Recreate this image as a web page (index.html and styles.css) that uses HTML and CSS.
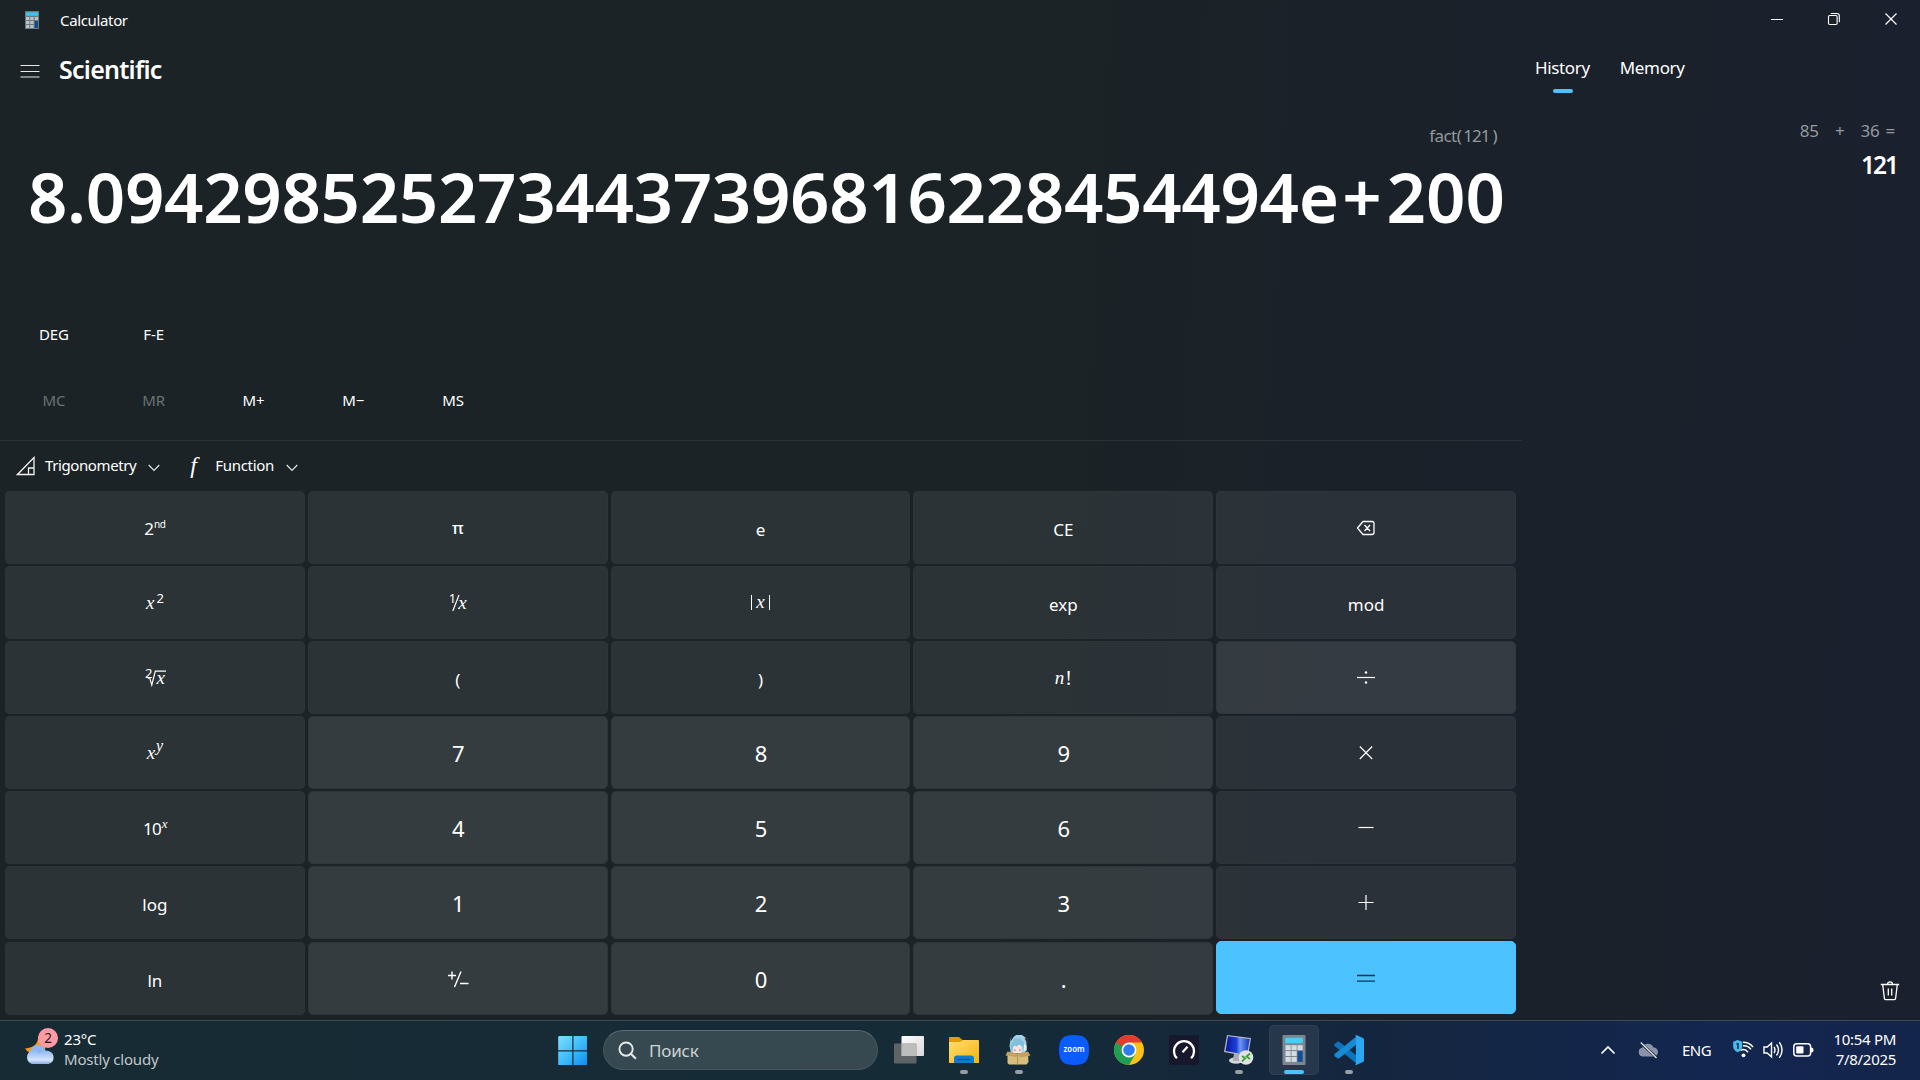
FILE: index.html
```html
<!DOCTYPE html>
<html lang="en">
<head>
<meta charset="utf-8">
<title>Calculator</title>
<link rel="stylesheet" href="styles.css">
</head>
<body>
<div class="desktop">
  <div class="window">
    <header class="titlebar">
      <svg class="app-icon" viewBox="0 0 14 18"><rect width="14" height="18" rx=".6" fill="#6d7a82"/><rect x="1" y="1.4" width="12" height="3.4" fill="#35c8f3"/><g fill="#b9c3c9"><rect x="1" y="6" width="3.3" height="3"/><rect x="5.3" y="6" width="3.3" height="3"/><rect x="9.7" y="6" width="3.3" height="3"/><rect x="1" y="10" width="3.3" height="3"/><rect x="5.3" y="10" width="3.3" height="3"/><rect x="1" y="14" width="3.3" height="3"/><rect x="5.3" y="14" width="3.3" height="3"/></g><rect x="9.7" y="10" width="3.3" height="7" fill="#134b8a"/></svg>
      <span class="app-name">Calculator</span>
      <div class="caption-buttons">
        <svg viewBox="0 0 57 40"><path d="M22 19.5h12" stroke="#fff" fill="none"/></svg>
        <svg viewBox="0 0 57 40"><g fill="none" stroke="#fff" stroke-width="1.1"><rect x="22.5" y="15.5" width="8.6" height="9" rx="1.2"/><path d="M24.800 13.500h6.200a2.300 2.300 0 0 1 2.300 2.300v6.400"/></g></svg>
        <svg viewBox="0 0 57 40"><path d="M22.500 13.500l11 11M33.500 13.500l-11 11" stroke="#fff" stroke-width="1.200" fill="none"/></svg>
      </div>
    </header>
    <div class="content">
      <main class="calc">
        <div class="mode">
          <svg class="burger" viewBox="0 0 20 16"><path d="M.5 2.500h19M.5 8.500h19M.5 14h19" stroke="#e8eaea" stroke-width="1.100"/></svg>
          <h1>Scientific</h1>
        </div>
        <div class="expression"><span>fact(</span><span class="arg">121</span><span>)</span></div>
        <div class="result"><span class="mantissa">8.0942985252734437396816228454494</span>e<span class="exp-sign">+</span>200</div>
        <div class="flat-row deg"><span>DEG</span><span>F-E</span></div>
        <div class="flat-row mem"><span class="off">MC</span><span class="off">MR</span><span>M+</span><span>M−</span><span>MS</span></div>
        <div class="menus">
          <svg class="tri" viewBox="0 0 20 20"><path d="M1.500 18.500h16.500V1.500zM12.500 18v-6H18" fill="none" stroke="#f1f3f3" stroke-width="1.300"/></svg>
          <span class="trig">Trigonometry</span>
          <svg class="chev" viewBox="0 0 12 8"><path d="M.7 1l5.300 5.500L11.300 1" fill="none" stroke="#e4e6e6" stroke-width="1.200"/></svg>
          <span class="f">f</span>
          <span class="func">Function</span>
          <svg class="chev" viewBox="0 0 12 8"><path d="M.7 1l5.300 5.500L11.300 1" fill="none" stroke="#e4e6e6" stroke-width="1.200"/></svg>
        </div>
        <div class="keys">
          <div class="key"><span class="sym second">2<sup class="nd">nd</sup></span></div>
          <div class="key"><span class="sym pi">π</span></div>
          <div class="key"><span>e</span></div>
          <div class="key"><span>CE</span></div>
          <div class="key"><svg class="ic" viewBox="0 0 20 20"><path d="M7 3.500h9a2 2 0 0 1 2 2v9a2 2 0 0 1-2 2H7L1.500 10zM8.500 7l5.500 6M14 7l-5.500 6" fill="none" stroke="#fff" stroke-width="1.300" stroke-linejoin="round"/></svg></div>

          <div class="key"><span class="sym"><i>x</i><sup class="two">2</sup></span></div>
          <div class="key"><span class="sym frac"><sup class="one">1</sup><svg viewBox="0 0 8 18"><path d="M.8 17L7 1" stroke="#fff" stroke-width="1.200"/></svg><i>x</i></span></div>
          <div class="key"><span class="sym abs"><b></b><i>x</i><b></b></span></div>
          <div class="key"><span>exp</span></div>
          <div class="key"><span>mod</span></div>

          <div class="key"><span class="sym root"><sup class="deg2">2</sup><svg viewBox="0 0 20 20"><path d="M.8 10.500l1.800-.8L4.800 17 8.300 3.200H19" fill="none" stroke="#fff" stroke-width="1.200"/></svg><i>x</i></span></div>
          <div class="key"><span>(</span></div>
          <div class="key"><span>)</span></div>
          <div class="key"><span class="sym"><i>n</i><b class="bang">!</b></span></div>
          <div class="key hover"><svg class="ic" viewBox="0 0 20 20"><path d="M1 9.500h18" stroke="#fff" stroke-width="1.200"/><circle cx="10" cy="4.500" r="1.200" fill="#fff"/><circle cx="10" cy="14.500" r="1.200" fill="#fff"/></svg></div>

          <div class="key"><span class="sym"><i>x</i><sup class="pow"><i>y</i></sup></span></div>
          <div class="key num"><span>7</span></div>
          <div class="key num"><span>8</span></div>
          <div class="key num"><span>9</span></div>
          <div class="key"><svg class="ic" viewBox="0 0 20 20"><path d="M3.800 3.500l12.400 12.500M16.200 3.500L3.800 16" stroke="#fff" stroke-width="1.200"/></svg></div>

          <div class="key"><span class="sym ten-key">10<sup class="ten"><i>x</i></sup></span></div>
          <div class="key num"><span>4</span></div>
          <div class="key num"><span>5</span></div>
          <div class="key num"><span>6</span></div>
          <div class="key"><svg class="ic" viewBox="0 0 20 20"><path d="M2.500 9.500h15" stroke="#fff" stroke-width="1.200"/></svg></div>

          <div class="key"><span>log</span></div>
          <div class="key num"><span>1</span></div>
          <div class="key num"><span>2</span></div>
          <div class="key num"><span>3</span></div>
          <div class="key"><svg class="ic" viewBox="0 0 20 20"><path d="M2.500 9.500h15M10 2v15" stroke="#fff" stroke-width="1.200"/></svg></div>

          <div class="key last"><span>ln</span></div>
          <div class="key num last"><svg class="sign" viewBox="0 0 24 20"><path d="M2 6.500h8M6 2.500v8M8.500 18L15 2.500M14 14.500h8.500" stroke="#fff" stroke-width="1.400" fill="none"/></svg></div>
          <div class="key num last"><span>0</span></div>
          <div class="key num last"><span>.</span></div>
          <div class="key equals"><svg class="ic" viewBox="0 0 20 20"><path d="M1 7.500h18M1 13.200h18" stroke="#173549" stroke-width="1.300"/></svg></div>
        </div>
      </main>
      <aside class="history">
        <nav class="tabs"><span class="tab active">History</span><span class="tab">Memory</span></nav>
        <div class="entry">
          <div class="entry-exp"><span>85</span><span class="plus">+</span><span>36</span><span class="eq">=</span></div>
          <div class="entry-res">121</div>
        </div>
        <svg class="trash" viewBox="0 0 20 22"><g fill="none" stroke="#fff" stroke-width="1.300"><path d="M.8 4.500h18.400M7.500 4.300a2.500 2.500 0 0 1 5 0M2.700 4.500l1.700 13.800a1.500 1.500 0 0 0 1.500 1.300h8.200a1.500 1.500 0 0 0 1.500-1.300L17.300 4.500M8.300 8.500v7M11.700 8.500v7"/></g></svg>
      </aside>
    </div>
  </div>

  <footer class="taskbar">
    <div class="weather">
      <div class="weather-icon">
        <svg viewBox="0 0 32 32"><defs><linearGradient id="cl" x1="0" y1="0" x2="0" y2="1"><stop offset="0" stop-color="#8fb9f2"/><stop offset=".7" stop-color="#d5e4fb"/><stop offset="1" stop-color="#8ba8e6"/></linearGradient></defs><path d="M14 1c.8 7-4 12-13 12.500C4 18 9 20 14 19c5-1 8-5 8-9S18 3 14 1z" fill="#f29a1f"/><circle cx="14" cy="18" r="8" fill="#8fb6f0"/><path d="M8 29a7 7 0 0 1-1-13c4-1 7 .5 8.500 3 2-3 6-4 9-3a6.700 6.700 0 0 1 0 13z" fill="url(#cl)"/></svg>
        <span class="badge">2</span>
      </div>
      <div class="weather-text"><span>23°C</span><span class="sub">Mostly cloudy</span></div>
    </div>
    <div class="dock">
      <div class="app start"><svg viewBox="0 0 30 30"><defs><linearGradient id="wn" x1="0" y1="0" x2="1" y2="1"><stop offset="0" stop-color="#7fdfff"/><stop offset=".5" stop-color="#41bdfb"/><stop offset="1" stop-color="#0e8df0"/></linearGradient></defs><path d="M1 1h13.300v14.300H.2V2zM15.500 1H29v14.300H15.500zM.2 16.400h14.100V30H.2zM15.500 16.400H29V30H15.500z" fill="url(#wn)"/></svg></div>
      <div class="search"><svg viewBox="0 0 20 20"><circle cx="8.500" cy="8.500" r="7" fill="none" stroke="#e6e9ea" stroke-width="2"/><path d="M13.800 13.800l5 5" stroke="#e6e9ea" stroke-width="2.200"/></svg><span>Поиск</span></div>
      <div class="app"><svg viewBox="0 0 30 30"><defs><linearGradient id="tv" x1="0" y1="0" x2="1" y2="1"><stop offset="0" stop-color="#fff"/><stop offset="1" stop-color="#d8d8d8"/></linearGradient></defs><rect x="7.500" y="1" width="22.500" height="20" rx="1" fill="url(#tv)"/><rect x="0" y="8.500" width="22.500" height="20" rx="1" fill="#777" opacity=".75"/><rect x="7.500" y="8.500" width="15" height="12.500" fill="#bdbdbd"/></svg></div>
      <div class="app run"><svg viewBox="0 0 30 30"><defs><linearGradient id="fo" x1="0" y1="0" x2="1" y2="1"><stop offset="0" stop-color="#ffdd72"/><stop offset="1" stop-color="#f7b50c"/></linearGradient></defs><path d="M0 3a1 1 0 0 1 1-1h9l4 3.500H16V12H0z" fill="#e09b05"/><path d="M0 7h11.500L14 5h15a1 1 0 0 1 1 1v22H0z" fill="url(#fo)"/><path d="M5 28v-4.500A3 3 0 0 1 8 20.500h14a3 3 0 0 1 3 3V28z" fill="#0e7ad0"/><path d="M8.500 24.500h13" stroke="#0a4f94" stroke-width="1.200"/></svg></div>
      <div class="app run"><svg viewBox="0 0 30 30"><path d="M7 2l2 .5L12 0h6l4 3 1 12-3 3H7L5.500 11z" fill="#a3d3e6"/><path d="M6.500 1l3 1.500L7 6zM24.500 3l-4 .5 3.500 6z" fill="#2e3140"/><path d="M9 10h9l-.5 8H9z" fill="#f7e3df"/><path d="M6.500 10l4-6.500h6l3.500 4v8l-2-4-2.500-2-3 2-2.500-1-2 5-1.500 1z" fill="#7fc0dc"/><path d="M10 14.500h1.500v1.300H10zM15 14.500h1.500v1.300H15z" fill="#b8707a"/><path d="M20 9l2.500 2-1 4-2 2z" fill="#e9f1f5"/><path d="M3.500 17l9.500 1.500L24 17l.5 10-2 2.500H5L3.500 28z" fill="#d9bd7d"/><path d="M3.500 16.500L1.500 20.500l11 1.500 1-3.500zM24 16.500l2.500 4-10.500 2-2.500-4z" fill="#c2a163"/><path d="M13.500 19v10.500" stroke="#b08d50"/></svg></div>
      <div class="app"><svg viewBox="0 0 30 30"><path d="M15 0C26 0 30 4 30 15s-4 15-15 15S0 26 0 15 4 0 15 0z" fill="#0b5cff"/><text x="4.500" y="17" textLength="21" lengthAdjust="spacingAndGlyphs" class="zoom-word">zoom</text></svg></div>
      <div class="app"><svg viewBox="0 0 30 30"><circle cx="15" cy="15" r="15" fill="#fbc116"/><path d="M2 7.500A15 15 0 0 0 15 30l6.500-11.200L8.500 18.800z" fill="#1f9d50"/><path d="M15 7.500h13A15 15 0 0 0 2 7.500L8.500 18l6.500-6z" fill="#e33b2e"/><path d="M2 7.500l6.500 11.300 3-3L8.700 11z" fill="#1f9d50"/><circle cx="15" cy="15" r="7.400" fill="#fff"/><circle cx="15" cy="15" r="5.800" fill="#2d7bee"/></svg></div>
      <div class="app"><svg viewBox="0 0 30 30"><rect width="30" height="30" rx="1" fill="#18182c"/><path d="M8 23.300a10 10 0 1 1 14 0" fill="none" stroke="#fff" stroke-width="2.200"/><path d="M13.500 17.200l5-5.500" stroke="#fff" stroke-width="2.200"/></svg></div>
      <div class="app run"><svg viewBox="0 0 30 30"><defs><linearGradient id="mo" x1="0" y1="0" x2="1" y2="0"><stop offset="0" stop-color="#0a14a0"/><stop offset=".45" stop-color="#1c3fd8"/><stop offset=".6" stop-color="#6f97f4"/><stop offset="1" stop-color="#1433c0"/></linearGradient></defs><ellipse cx="12" cy="25.500" rx="7" ry="3.200" fill="#d4d7da"/><path d="M10 18l6 2-1 6h-6z" fill="#a8adb3"/><path d="M3 0l24 3-3 18.500L0 17z" fill="#b4bac4"/><path d="M4 1.300L25.700 4 23 20 1.500 16z" fill="url(#mo)"/><circle cx="22" cy="22.500" r="7.300" fill="#e0e3e1"/><path d="M18 21l3.200 2.300-3.200 3M26 18.500L22.500 21.500l3.500 2.500" fill="none" stroke="#37a02f" stroke-width="1.700"/></svg></div>
      <div class="app current"><svg viewBox="0 0 30 30"><rect x="3.500" width="23" height="30" rx="1" fill="#7b868f"/><rect x="6.200" y="2.800" width="17.600" height="5.400" rx=".6" fill="#41d1f7"/><g fill="#d3dbe3"><rect x="6.500" y="10.200" width="5.200" height="4.900"/><rect x="12.500" y="10.200" width="5.200" height="4.900"/><rect x="18.500" y="10.200" width="5.200" height="4.900"/><rect x="6.500" y="16.100" width="5.200" height="4.900"/><rect x="12.500" y="16.100" width="5.200" height="4.900"/><rect x="6.500" y="22" width="5.200" height="4.900"/><rect x="12.500" y="22" width="5.200" height="4.900"/></g><rect x="18.500" y="16.100" width="5.200" height="10.800" fill="#124f97"/></svg></div>
      <div class="app run"><svg viewBox="0 0 30 30"><path d="M.8 8.800L3.500 6.700q1-.6 2 .2L23 21v8L.9 11.300q-1.200-1.200-.1-2.500z" fill="#0c74bd"/><path d="M.8 21.200l2.700 2.100q1 .6 2-.2L23 9V1L.9 18.700q-1.200 1.200-.1 2.500z" fill="#168bd3"/><path d="M22.300 0L29 3q1 .5 1 1.500v21q0 1-1 1.500l-6.700 3q-1 0-1.300-.5.900.2.900-1V1.500q0-1.200-.9-1 .3-.5 1.300-.5z" fill="#2aa6f3"/></svg></div>
    </div>
    <div class="tray">
      <svg class="t-chev" viewBox="0 0 16 10"><path d="M1.500 8.500L8 2l6.500 6.500" fill="none" stroke="#fff" stroke-width="1.700"/></svg>
      <svg class="t-cloud" viewBox="0 0 20 17"><path d="M5 14.500a4.400 4.400 0 0 1-.8-8.700A6 6 0 0 1 15.500 5.500 4.500 4.500 0 0 1 15.500 14.500z" fill="#8b94a6"/><path d="M1.800.2L19 16" stroke="#15263f" stroke-width="2.600"/><path d="M2.800.5L18.500 16" stroke="#e5e8ee" stroke-width="1.300"/></svg>
      <span class="lang">ENG</span>
      <svg class="t-wifi" viewBox="0 0 21 18"><g fill="none" stroke="#fff" stroke-width="1.500"><path d="M10 2.300a13.500 13.500 0 0 1 10 4.600M10 5.800a9 9 0 0 1 8 3.600M7.500 10.400a6 6 0 0 1 7.500 1.800"/></g><circle cx="10.500" cy="15.300" r="1.900" fill="#fff"/><path d="M4.700 0l4.500 1.700v4.500q0 4-4.500 6Q.2 10.200.2 6.200V1.700z" fill="#4cb9ec"/><path d="M4.900 3v6M3.400 3.800h1.500" stroke="#10304f" stroke-width="1.600"/></svg>
      <svg class="t-vol" viewBox="0 0 20 18"><g fill="none" stroke="#fff" stroke-width="1.400"><path d="M1 6h3.200L8.500 2v14L4.200 12H1zM11 6q2 3 0 6M13.500 3.500q4 5.500 0 11M16.300 1.200q5.500 7.800 0 15.600"/></g></svg>
      <svg class="t-bat" viewBox="0 0 21 14"><rect x=".8" y=".8" width="16.800" height="12.200" rx="3" fill="none" stroke="#fff" stroke-width="1.500"/><rect x="3.200" y="3.200" width="7.300" height="7.400" rx="1" fill="#fff"/><path d="M18 4.500q2.500 0 2.500 2.500T18 9.500z" fill="#fff"/></svg>
      <div class="clock"><span>10:54 PM</span><span>7/8/2025</span></div>
    </div>
  </footer>
</div>
</body>
</html>
```
FILE: styles.css
```css
* { box-sizing: border-box; }
body {
  margin: 0;
  background: #1c2326;
  color: #fff;
  font-family: "Noto Sans", "Open Sans", sans-serif;
}
svg { display: block; flex: none; }
.desktop { width: 1920px; height: 1080px; display: flex; flex-direction: column; overflow: hidden; }
.window {
  height: 1020px;
  display: flex;
  flex-direction: column;
  background: linear-gradient(93deg, #1b2326 0%, #1b2326 52%, #1b2129 70%, #1b212b 85%, #1a202e 100%);
}

/* Title bar */
.titlebar { height: 40px; display: flex; align-items: center; padding-left: 25px; }
.app-icon { width: 14px; height: 18px; }
.app-name { margin-left: 21px; font-size: 15px; letter-spacing: -0.350px; }
.caption-buttons { display: flex; margin-left: auto; }
.caption-buttons svg { width: 57px; height: 40px; }

/* Calculator pane */
.content { flex: 1; display: flex; min-height: 0; }
.calc { width: 1522px; display: flex; flex-direction: column; }
.mode { height: 62px; display: flex; align-items: center; padding-left: 20px; }
.burger { width: 20px; height: 16px; }
.mode h1 { margin: 0 0 5px 19px; font-size: 25px; font-weight: 600; line-height: 30px; letter-spacing: -0.750px; }
.expression {
  height: 46px; display: flex; justify-content: flex-end; align-items: flex-end;
  padding-right: 25px; font-size: 17px; line-height: 24px; color: #949a9e; letter-spacing: -0.550px;
}
.expression .arg { margin: 0 3px 0 2px; letter-spacing: -1px; }
.result {
  height: 166px; padding-right: 17px; text-align: right; white-space: nowrap;
  font-size: 69px; font-weight: 600; line-height: 97px;
}
.mantissa { letter-spacing: -0.340px; }
.exp-sign { margin: 0 5px 0 3px; }
.flat-row { display: flex; padding-left: 4px; font-size: 15px; line-height: 40px; }
.flat-row span { width: 99.800px; text-align: center; letter-spacing: -0.100px; }
.flat-row .off { color: #6b7173; }
.deg { height: 66px; }
.mem { height: 60px; }
.menus { height: 51px; border-top: 1px solid #2c3336; display: flex; align-items: center; padding: 0 0 3px 16px; font-size: 15px; }
.tri { width: 20px; height: 20px; margin-top: 3px; }
.trig { margin-left: 9px; letter-spacing: -0.400px; }
.func { margin-left: 11px; letter-spacing: -0.300px; }
.chev { width: 12px; height: 8px; margin: 6px 0 0 12px; }
.f { margin-left: 30px; width: 14px; font: italic 24px/30px "Liberation Serif", serif; }

/* Keypad */
.keys {
  height: 524px; padding: 0 6px 0 5px;
  display: grid; grid-template-columns: repeat(5, 1fr); grid-template-rows: repeat(6, 73px) 74px; gap: 2px 3px;
}
.key {
  height: 73px;
  display: flex; align-items: center; justify-content: center;
  background: rgba(255, 255, 255, 0.075);
  border: 1px solid rgba(255, 255, 255, 0.015);
  border-radius: 5px; font-size: 17px;
}
.last { align-self: end; }
.key > span { position: relative; top: 2px; }
.key > .sym { top: 0; display: flex; align-items: center; height: 24px; }
.num { background: rgba(255, 255, 255, 0.118); border: 1px solid #2f3639; font-size: 22px; }
.num > span { top: 0; left: 0.5px; }
.hover { background: rgba(255, 255, 255, 0.118); border-color: #2f363e; }
.equals { background: #4cc2ff; border-color: #4cc2ff; }
.sym i { font: italic 19px/20px "Liberation Serif", serif; }
.sym sup { line-height: 1; vertical-align: baseline; }
.key > .second { top: 1px; }
.nd { font-size: 10px; margin-bottom: 10px; letter-spacing: -0.300px; }
.pi { font-weight: 500; }
.two { font-size: 13px; margin: 0 0 9px 2px; }
.one { font-size: 13px; margin: 0 -4px 8px 0; }
.frac svg { width: 8px; height: 18px; }
.frac > i { margin-left: -2px; }
.abs { gap: 4px; }
.abs b { width: 1px; height: 15px; background: #fff; }
.abs i { margin-bottom: 2px; }
.root svg { width: 20px; height: 20px; margin-left: -5px; }
.root > i { margin-left: -11px; }
.deg2 { font-size: 13px; margin-bottom: 8px; }
.bang { font: 20px/20px "Liberation Serif", serif; margin-left: 1px; }
.sym .pow i { font-size: 16px; line-height: 12px; }
.pow { margin: 0 0 13px 1px; }
.key > .ten-key { letter-spacing: -0.800px; top: 1px; }
.sym .ten i { font-size: 13px; line-height: 12px; }
.ten { margin: 0 0 10px 1px; }
.ic { width: 20px; height: 20px; }
.sign { width: 24px; height: 20px; }

/* History pane */
.history { flex: 1; display: flex; flex-direction: column; padding: 0 20px 0 13px; }
.tabs { display: flex; gap: 30px; height: 53px; font-size: 17px; line-height: 24px; padding-top: 16px; letter-spacing: -0.350px; }
.tab { display: flex; flex-direction: column; align-items: center; }
.active::after { content: ""; width: 20px; height: 4px; border-radius: 2px; background: #4cc2ff; margin: 9px 0 0 1px; }
.entry { margin-top: 26px; text-align: right; }
.entry-exp { display: flex; justify-content: flex-end; font-size: 17px; line-height: 24px; color: #949a9e; padding-right: 5px; letter-spacing: -0.200px; }
.plus { margin: 0 16px 0 16px; }
.eq { margin-left: 6px; }
.entry-res { font-size: 24.500px; font-weight: 600; line-height: 32px; letter-spacing: -2px; padding-right: 3px; margin-top: 6px; }
.trash { width: 20px; height: 22px; margin: auto 0 18px auto; }

/* Taskbar */
.taskbar {
  height: 60px; display: flex; align-items: center; border-top: 1px solid #3e494f; padding-bottom: 1px;
  background: linear-gradient(90deg, #172b34 0%, #152b36 50%, #14263f 72%, #132650 90%, #14254b 100%);
}
.weather { width: 543px; display: flex; padding-left: 24px; }
.weather-icon { position: relative; width: 32px; height: 32px; margin-top: 3px; }
.weather-icon svg { width: 32px; height: 32px; }
.badge {
  position: absolute; left: 14px; top: -7px; width: 20px; height: 20px; border-radius: 50%;
  background: #ff99a4; color: #1b1b1b; font-size: 13.500px; line-height: 20px; text-align: center;
}
.weather-text { display: flex; flex-direction: column; margin: -3px 0 0 8px; font-size: 15px; line-height: 20px; letter-spacing: -0.200px; }
.sub { color: #c0c8cb; }
.dock { display: flex; align-items: center; }
.app { position: relative; width: 50px; height: 50px; margin-right: 5px; border-radius: 5px; display: flex; align-items: center; justify-content: center; }
.app svg { width: 30px; height: 30px; }
.start { margin-left: 5px; }
.run::after, .current::after {
  content: ""; position: absolute; bottom: 1px; left: 21px; width: 8px; height: 4px; border-radius: 2px; background: #969ea5;
}
.current { background: rgba(255, 255, 255, 0.08); border: 1px solid rgba(255, 255, 255, 0.04); }
.current::after { left: 14px; bottom: 0; width: 20px; background: #4cc2ff; }
.zoom-word { font: 600 8px "Noto Sans", sans-serif; fill: #fff; }
.search {
  width: 275px; height: 40px; margin-right: 6px; border-radius: 20px; display: flex; align-items: center;
  padding-left: 14px; font-size: 17px; letter-spacing: -0.200px; color: #cdd3d5; background: #364951; border: 1px solid #45575f; border-top-color: #5b6b73;
}
.search svg { width: 19px; height: 19px; margin-right: 12px; }
.tray { margin-left: auto; display: flex; align-items: center; padding-right: 24px; font-size: 15px; }
.t-chev { width: 16px; height: 10px; }
.t-cloud { width: 20px; height: 17px; margin-left: 22px; }
.lang { margin: -1px 0 0 24px; width: 29px; letter-spacing: -0.500px; }
.t-wifi { width: 21px; height: 18px; margin: -2px 0 0 22px; }
.t-vol { width: 20px; height: 18px; margin-left: 9px; }
.t-bat { width: 21px; height: 14px; margin-left: 10px; }
.clock { width: 82px; margin-top: -3px; display: flex; flex-direction: column; text-align: right; line-height: 20px; letter-spacing: -0.300px; }
```
